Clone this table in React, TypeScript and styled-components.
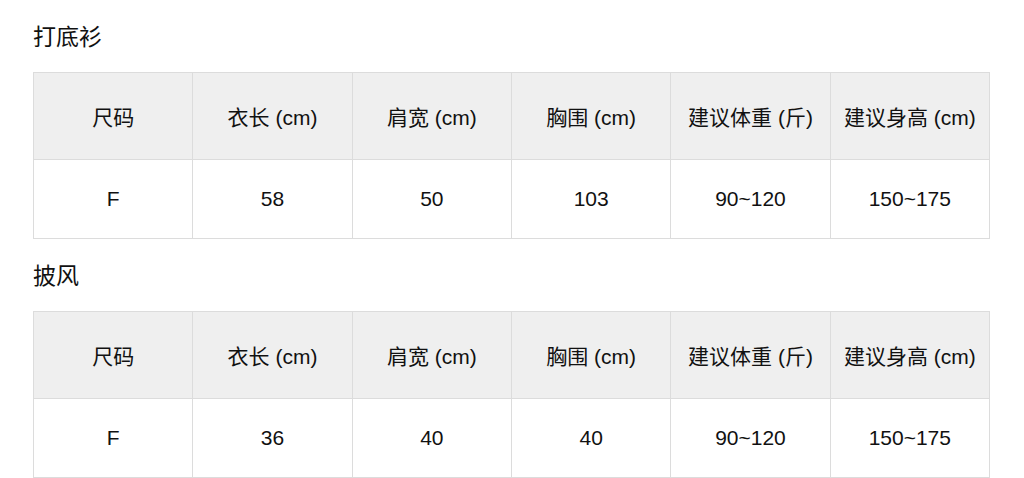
import React from "react";
import styled, { createGlobalStyle } from "styled-components";

const GlobalStyle = createGlobalStyle`
  html, body {
    margin: 0;
    padding: 0;
    background: #ffffff;
  }
  body {
    font-family: "Liberation Sans", "Noto Sans CJK SC", sans-serif;
    color: #111111;
  }
`;

const Page = styled.div`
  padding: 20px 34px 0 33px;
  width: 957px;
`;

const Section = styled.section`
  margin-bottom: 20px;

  &:last-child {
    margin-bottom: 0;
  }
`;

const Title = styled.h3`
  margin: 0 0 22px 0;
  height: 30px;
  line-height: 30px;
  font-size: 23px;
  font-weight: 400;
  font-family: "Noto Sans CJK SC", sans-serif;
  color: #111111;
`;

const Table = styled.table`
  width: 957px;
  border-collapse: collapse;
  table-layout: fixed;
`;

const HeadCell = styled.th`
  height: 86px;
  padding: 0;
  background: #efefef;
  border: 1px solid #dcdcdc;
  font-size: 21px;
  font-weight: 400;
  color: #111111;
  text-align: center;
  vertical-align: middle;
  white-space: nowrap;
`;

const Cell = styled.td`
  height: 78px;
  padding: 0;
  background: #ffffff;
  border: 1px solid #dcdcdc;
  font-size: 21px;
  color: #111111;
  text-align: center;
  vertical-align: middle;
`;

const headers = ["尺码", "衣长 (cm)", "肩宽 (cm)", "胸围 (cm)", "建议体重 (斤)", "建议身高 (cm)"];

interface SizeTable {
  name: string;
  row: string[];
}

const tables: SizeTable[] = [
  { name: "打底衫", row: ["F", "58", "50", "103", "90~120", "150~175"] },
  { name: "披风", row: ["F", "36", "40", "40", "90~120", "150~175"] },
];

const App: React.FC = () => {
  return (
    <>
      <GlobalStyle />
      <Page>
        {tables.map((t) => (
          <Section key={t.name}>
            <Title>{t.name}</Title>
            <Table>
              <thead>
                <tr>
                  {headers.map((h) => (
                    <HeadCell key={h}>{h}</HeadCell>
                  ))}
                </tr>
              </thead>
              <tbody>
                <tr>
                  {t.row.map((v, i) => (
                    <Cell key={i}>{v}</Cell>
                  ))}
                </tr>
              </tbody>
            </Table>
          </Section>
        ))}
      </Page>
    </>
  );
};

export default App;
